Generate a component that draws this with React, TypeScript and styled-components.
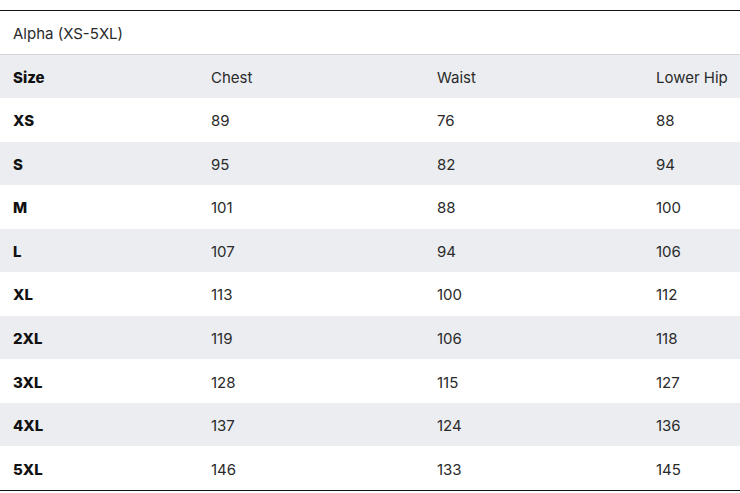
import React from "react";
import styled, { createGlobalStyle } from "styled-components";

const Global = createGlobalStyle`
  html, body { margin: 0; padding: 0; background: #ffffff; }
  body { font-family: Inter, "Open Sans", sans-serif; color: #222222; }
`;

const Wrap = styled.div`
  padding-top: 10px;
  width: 740px;
`;

const Table = styled.div`
  border-top: 1px solid #111111;
  border-bottom: 1px solid #111111;
`;

const Caption = styled.div`
  height: 44px;
  box-sizing: border-box;
  padding-top: 2px;
  display: flex;
  align-items: center;
  padding-left: 13px;
  font-size: 15px;
  color: #2a2a2a;
  border-bottom: 1px solid #d3d5d9;
`;

const Row = styled.div<{ $shade: boolean }>`
  display: grid;
  grid-template-columns: 198px 226px 219px 97px;
  align-items: center;
  height: 43.56px;
  box-sizing: border-box;
  padding-top: 2px;
  background: ${(p) => (p.$shade ? "#ebedf1" : "#ffffff")};
`;

const HeadRow = styled(Row)`
  height: 43px;
`;

const Cell = styled.div<{ $bold?: boolean }>`
  padding-left: 13px;
  font-size: 15px;
  font-weight: ${(p) => (p.$bold ? 800 : 400)};
  color: ${(p) => (p.$bold ? "#111111" : "#2a2a2a")};
  white-space: nowrap;
`;

const rows: [string, number, number, number][] = [
  ["XS", 89, 76, 88],
  ["S", 95, 82, 94],
  ["M", 101, 88, 100],
  ["L", 107, 94, 106],
  ["XL", 113, 100, 112],
  ["2XL", 119, 106, 118],
  ["3XL", 128, 115, 127],
  ["4XL", 137, 124, 136],
  ["5XL", 146, 133, 145],
];

export default function App() {
  return (
    <Wrap>
      <Global />
      <Table>
        <Caption>Alpha (XS-5XL)</Caption>
        <HeadRow $shade>
          <Cell $bold>Size</Cell>
          <Cell>Chest</Cell>
          <Cell>Waist</Cell>
          <Cell>Lower Hip</Cell>
        </HeadRow>
        {rows.map((r, i) => (
          <Row key={r[0]} $shade={i % 2 === 1}>
            <Cell $bold>{r[0]}</Cell>
            <Cell>{r[1]}</Cell>
            <Cell>{r[2]}</Cell>
            <Cell>{r[3]}</Cell>
          </Row>
        ))}
      </Table>
    </Wrap>
  );
}
